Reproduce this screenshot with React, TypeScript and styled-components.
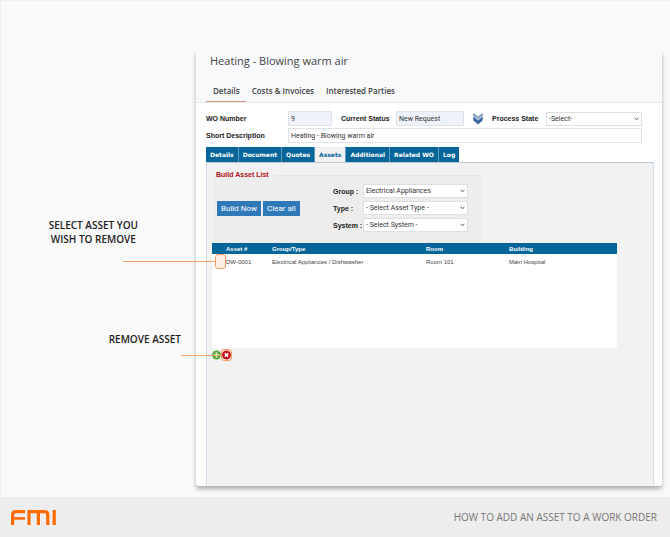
import React from "react";
import styled, { createGlobalStyle } from "styled-components";

const accent = "#f5a068";
const brandBlue = "#06669a";
const ui = `"Open Sans", "Noto Sans", sans-serif`;
const arial = `"Liberation Sans", Arial, sans-serif`;
const control = `Roboto, "Noto Sans", sans-serif`;

const GlobalStyle = createGlobalStyle`
  *, *::before, *::after { box-sizing: border-box; }
  body { margin: 0; background: #f9f9f9; font-family: ${ui}; color: #333; }
  button, input, select { font: inherit; color: inherit; margin: 0; }
`;

const Page = styled.div`
  min-height: 100vh;
  display: flex;
  flex-direction: column;
  border-left: 1px solid #ededed;
  border-top: 1px solid #f0f0f0;
`;

const Stage = styled.main`
  flex: 1;
  display: grid;
  grid-template-columns: 195px minmax(0, 1fr);
  padding: 49px 8px 11px 0;
`;

const Callouts = styled.aside`
  display: flex;
  flex-direction: column;
  align-items: flex-end;
  gap: 86px;
  padding: 168px 15px 0 0;
`;

const Callout = styled.p<{ $inset?: boolean }>`
  margin: 0;
  padding-right: ${(p) => (p.$inset ? "43px" : "0")};
  text-align: center;
  font-size: 10px;
  line-height: 14px;
  font-weight: 600;
  color: #222;
`;

const Window = styled.section`
  display: flex;
  flex-direction: column;
  background: #fff;
  border-radius: 3px;
  box-shadow: 0 3px 4px rgba(0, 0, 0, 0.3);
`;

const WindowHeader = styled.header`
  background: #f8f9fb;
  border-bottom: 1px solid #e6e9ec;
  padding: 3px 10px 0;
`;

const Title = styled.h1`
  margin: 0;
  padding-left: 4px;
  font-size: 11px;
  line-height: 16px;
  font-weight: 400;
  color: #444;
`;

const Sections = styled.nav`
  display: flex;
  margin-top: 12px;
`;

const SectionLink = styled.a<{ $active?: boolean }>`
  padding: 0 6px 0 7px;
  &:not(:first-child) { padding-left: 6px; }
  font-size: 8px;
  line-height: 20px;
  font-weight: 600;
  color: #444;
  text-decoration: none;
  border-bottom: 1px solid ${(p) => (p.$active ? "#d79b84" : "transparent")};
`;

const Body = styled.div`
  flex: 1;
  display: flex;
  flex-direction: column;
  padding: 8px 8px 0 10px;
`;

const FieldGrid = styled.form`
  display: grid;
  grid-template-columns: 82px 44px 64px 68px 28px 54px minmax(60px, 1fr);
  align-items: center;
  row-gap: 2px;
  margin-right: 12px;
`;

const FieldLabel = styled.label<{ $inset?: boolean }>`
  padding-left: ${(p) => (p.$inset ? "9px" : "0")};
  font-family: ${arial};
  font-size: 7px;
  font-weight: 700;
  color: #222;
  white-space: nowrap;
`;

const TextField = styled.input<{ $filled?: boolean; $wide?: boolean }>`
  width: 100%;
  min-width: 0;
  height: 15px;
  padding: 0 2px;
  font-family: ${control};
  font-size: 7px;
  color: #333;
  border: 1px solid #e0e2e6;
  background: ${(p) => (p.$filled ? "#eef3fb" : "#fff")};
  grid-column: ${(p) => (p.$wide ? "2 / -1" : "auto")};
`;

const SelectBox = styled.span`
  display: grid;
  align-items: center;
  svg {
    grid-area: 1 / 1;
    justify-self: end;
    margin-right: 3px;
    pointer-events: none;
  }
`;

const NativeSelect = styled.select`
  grid-area: 1 / 1;
  appearance: none;
  width: 100%;
  height: 14px;
  padding: 0 2px;
  font-family: ${control};
  font-size: 7px;
  color: #333;
  background: #fff;
  border: 1px solid #dfdfdf;
  border-radius: 0;
`;

const BareButton = styled.button`
  display: grid;
  place-items: center;
  padding: 0;
  border: 0;
  background: none;
`;

const TabBar = styled.div`
  display: flex;
  margin-top: 4px;
`;

const Tab = styled.button<{ $active?: boolean }>`
  height: 15px;
  padding: 0 4px;
  border: 0;
  border-right: 1px solid #5c9dc0;
  font-family: "DejaVu Sans", Verdana, sans-serif;
  font-size: 6px;
  font-weight: 700;
  color: ${(p) => (p.$active ? brandBlue : "#fff")};
  background: ${(p) => (p.$active ? "#f2f2f2" : brandBlue)};
  &:last-child { border-right: 0; }
`;

const TabPanel = styled.div`
  flex: 1;
  padding: 7px 36px 0 5px;
  background: #f2f2f2;
  border: 1px solid #d5e0ee;
  border-top-color: #b9c9d6;
  border-bottom: 0;
`;

const Builder = styled.fieldset`
  margin: 0 0 0 1px;
  padding: 4px 13px 11px 4px;
  width: 268px;
  min-width: 0;
  border: 0;
  display: flex;
  align-items: center;
  justify-content: space-between;
  background: linear-gradient(#e4e4e4, #e4e4e4) 65px 0 / 100% 1px no-repeat #ededed;
`;

const Legend = styled.legend`
  padding: 0 3px 0 0;
  margin-left: -1px;
  font-family: ${arial};
  font-size: 7px;
  line-height: 10px;
  font-weight: 700;
  color: #b01020;
`;

const Actions = styled.div`
  display: flex;
  gap: 2px;
`;

const ActionButton = styled.button`
  height: 15px;
  padding: 0 4px;
  border: 0;
  font-family: ${control};
  font-size: 8px;
  color: #fff;
  background: #3079b9;
`;

const Filters = styled.div`
  display: grid;
  grid-template-columns: 30px 105px;
  align-items: center;
  row-gap: 3px;
`;

const ListArea = styled.div`
  min-height: 105px;
  background: #fff;
`;

const Table = styled.table`
  width: 100%;
  table-layout: fixed;
  border-collapse: collapse;
  font-family: ${arial};
  font-size: 6px;
  text-align: left;
`;

const HeadCell = styled.th<{ $width?: string }>`
  width: ${(p) => p.$width ?? "auto"};
  height: 11px;
  padding: 0;
  color: #fff;
  background: ${brandBlue};
`;

const Cell = styled.td`
  height: 15px;
  padding: 0;
  color: #444;
`;

const Marker = styled.span<{ $line: number }>`
  position: relative;
  display: grid;
  place-items: center;
  &::before {
    content: "";
    position: absolute;
    right: 100%;
    width: ${(p) => p.$line}px;
    height: 1px;
    background: ${accent};
  }
`;

const RowMarker = styled(Marker)`
  width: 11px;
  margin-left: 3px;
`;

const RowCheck = styled.input`
  appearance: none;
  width: 11px;
  height: 15px;
  border: 1px solid ${accent};
  border-radius: 3px;
  background: #fdeee3;
`;

const Tools = styled.div`
  display: flex;
  align-items: center;
  margin-top: 1px;
`;

const RemoveMarker = styled(Marker)`
  width: 11px;
  height: 12px;
  border: 1px solid ${accent};
  border-radius: 3px;
  background: #fdeee3;
`;

const Footer = styled.footer`
  display: flex;
  align-items: center;
  justify-content: space-between;
  height: 40px;
  padding: 0 13px 0 10px;
  background: #ededed;
`;

const FooterTitle = styled.span`
  font-size: 10px;
  font-weight: 500;
  color: #777;
`;

const Chevron = () => (
  <svg width="5" height="4" viewBox="0 0 5 4" fill="none" stroke="#555" aria-hidden="true">
    <path d="M0.6 0.8 2.5 2.8 4.4 0.8" />
  </svg>
);

const DoubleChevron = () => (
  <svg width="12" height="12" viewBox="0 0 12 12" aria-hidden="true">
    <path d="M.5 1 2.6 .4 6 3.4 9.4 .4 11.5 1 10.6 4 6 7.6 1.4 4Z" fill="#8fa9c9" />
    <path d="M.8 4.6 2.8 4.4 6 7.2 9.2 4.4 11.2 4.6 10.4 7.8 6 11.6 1.6 7.8Z" fill="#3c68a4" />
    <path d="M2 3.6 6 7 10 3.6" fill="none" stroke="#dfe9f4" strokeWidth=".7" />
  </svg>
);

const AddIcon = () => (
  <svg width="9" height="10" viewBox="0 0 9 10" aria-hidden="true">
    <circle cx="4.5" cy="5" r="4.5" fill="#58a83c" />
    <path d="M4.5 2.2V7.8M1.7 5H7.3" stroke="#d6f0c8" strokeWidth="1.6" />
  </svg>
);

const RemoveIcon = () => (
  <svg width="9" height="10" viewBox="0 0 9 10" aria-hidden="true">
    <circle cx="4.5" cy="5" r="4.5" fill="#c5161c" />
    <path d="M2.9 3.4 6.1 6.6M6.1 3.4 2.9 6.6" stroke="#fff" strokeWidth="1.5" />
  </svg>
);

const Logo = () => (
  <svg width="45" height="15" viewBox="0 0 45 15" fill="none" stroke="#ff6a00" strokeWidth="3.2" role="img" aria-label="FMI">
    <path d="M1.6 15V4.8Q1.6 1.6 4.8 1.6H14" />
    <path d="M1.6 8.4H14" strokeWidth="2.6" />
    <path d="M18 15V1.6H33.6Q36.8 1.6 36.8 4.8V15M27.4 1.6V15" />
    <path d="M43.2 0V15" />
  </svg>
);

function Select({ id, value }: { id: string; value: string }) {
  return (
    <SelectBox>
      <NativeSelect id={id} defaultValue={value}>
        <option>{value}</option>
      </NativeSelect>
      <Chevron />
    </SelectBox>
  );
}

const tabs = ["Details", "Document", "Quotes", "Assets", "Additional", "Related WO", "Log"];

const filters = [
  { id: "group", label: "Group :", value: "Electrical Appliances" },
  { id: "type", label: "Type :", value: "- Select Asset Type -" },
  { id: "system", label: "System :", value: "- Select System -" },
];

export default function App() {
  return (
    <>
      <GlobalStyle />
      <Page>
        <Stage>
          <Callouts>
            <Callout $inset>
              SELECT ASSET YOU
              <br />
              WISH TO REMOVE
            </Callout>
            <Callout>REMOVE ASSET</Callout>
          </Callouts>
          <Window>
            <WindowHeader>
              <Title>Heating - Blowing warm air</Title>
              <Sections>
                <SectionLink href="#details" $active>Details</SectionLink>
                <SectionLink href="#costs">Costs &amp; Invoices</SectionLink>
                <SectionLink href="#parties">Interested Parties</SectionLink>
              </Sections>
            </WindowHeader>
            <Body>
              <FieldGrid>
                <FieldLabel htmlFor="wo">WO Number</FieldLabel>
                <TextField id="wo" defaultValue="9" $filled />
                <FieldLabel htmlFor="status" $inset>Current Status</FieldLabel>
                <TextField id="status" defaultValue="New Request" $filled />
                <BareButton type="button" aria-label="Change status">
                  <DoubleChevron />
                </BareButton>
                <FieldLabel htmlFor="state">Process State</FieldLabel>
                <Select id="state" value="-Select-" />
                <FieldLabel htmlFor="description">Short Description</FieldLabel>
                <TextField id="description" defaultValue="Heating - Blowing warm air" $wide />
              </FieldGrid>
              <TabBar role="tablist">
                {tabs.map((tab) => (
                  <Tab key={tab} type="button" role="tab" aria-selected={tab === "Assets"} $active={tab === "Assets"}>
                    {tab}
                  </Tab>
                ))}
              </TabBar>
              <TabPanel role="tabpanel">
                <Builder>
                  <Legend>Build Asset List</Legend>
                  <Actions>
                    <ActionButton type="button">Build Now</ActionButton>
                    <ActionButton type="button">Clear all</ActionButton>
                  </Actions>
                  <Filters>
                    {filters.map((f) => (
                      <React.Fragment key={f.id}>
                        <FieldLabel htmlFor={f.id}>{f.label}</FieldLabel>
                        <Select id={f.id} value={f.value} />
                      </React.Fragment>
                    ))}
                  </Filters>
                </Builder>
                <ListArea>
                  <Table>
                    <thead>
                      <tr>
                        <HeadCell $width="14px" aria-label="Selected" />
                        <HeadCell $width="46px">Asset #</HeadCell>
                        <HeadCell>Group/Type</HeadCell>
                        <HeadCell $width="83px">Room</HeadCell>
                        <HeadCell $width="108px">Building</HeadCell>
                      </tr>
                    </thead>
                    <tbody>
                      <tr>
                        <Cell>
                          <RowMarker $line={92}>
                            <RowCheck type="checkbox" aria-label="Select DW-0001" />
                          </RowMarker>
                        </Cell>
                        <Cell>DW-0001</Cell>
                        <Cell>Electrical Appliances / Dishwasher</Cell>
                        <Cell>Room 101</Cell>
                        <Cell>Main Hospital</Cell>
                      </tr>
                    </tbody>
                  </Table>
                </ListArea>
                <Tools>
                  <BareButton type="button" aria-label="Add asset">
                    <AddIcon />
                  </BareButton>
                  <RemoveMarker $line={41}>
                    <BareButton type="button" aria-label="Remove asset">
                      <RemoveIcon />
                    </BareButton>
                  </RemoveMarker>
                </Tools>
              </TabPanel>
            </Body>
          </Window>
        </Stage>
        <Footer>
          <Logo />
          <FooterTitle>HOW TO ADD AN ASSET TO A WORK ORDER</FooterTitle>
        </Footer>
      </Page>
    </>
  );
}
